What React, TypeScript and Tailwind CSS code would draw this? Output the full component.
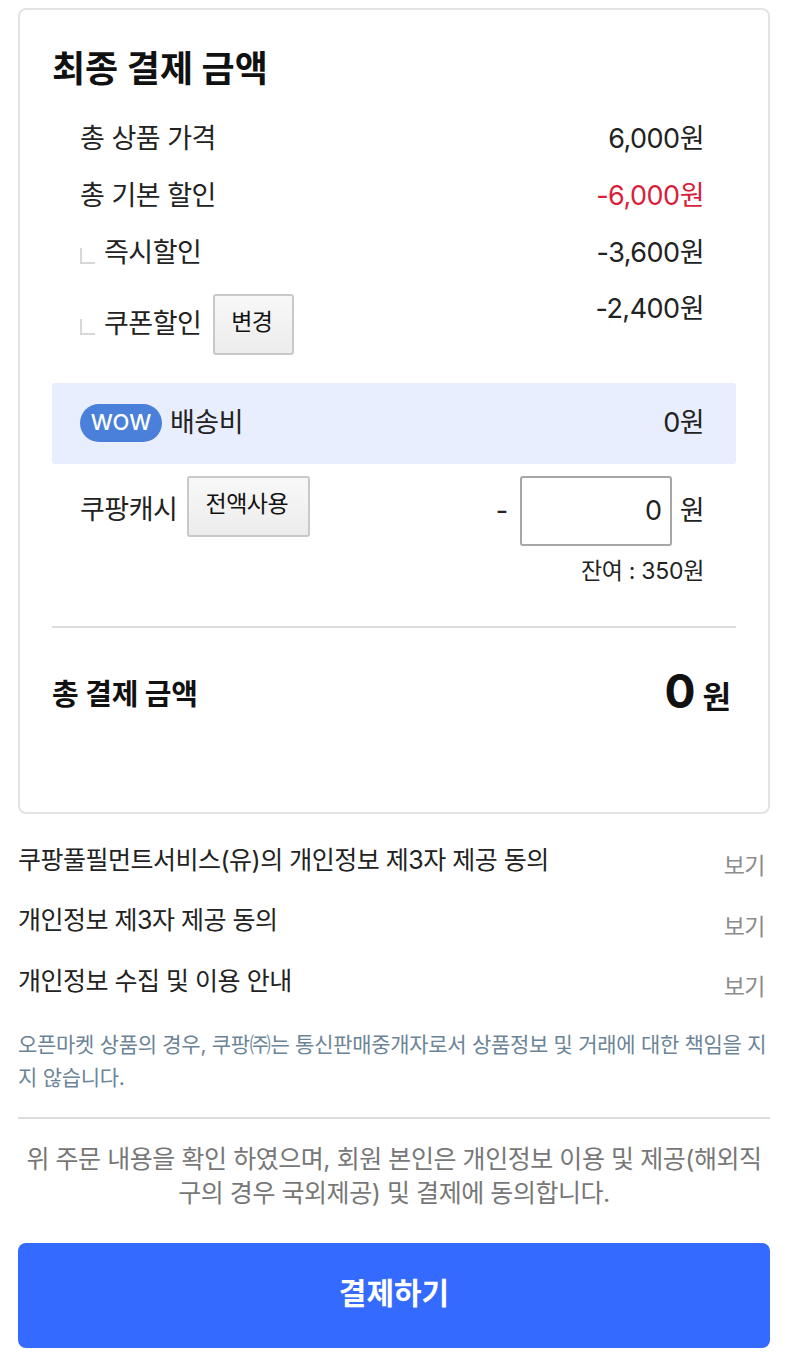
const rowClass = "flex h-[57px] items-center justify-between";

function Elbow() {
  return <span className="mr-[9px] mt-[5px] block h-[16px] w-[15px] border-b-2 border-l-2 border-[#d8d8d8]" />;
}

function GrayButton({ label, className }: { label: string; className: string }) {
  return (
    <button className={`h-[61px] rounded-[3px] border-2 border-[#c9c9c9] bg-gradient-to-b from-[#f8f8f8] to-[#ececec] pb-[5px] pr-[4px] text-[23px] leading-none text-[#111] ${className}`}>
      {label}
    </button>
  );
}

function AgreeRow({ label }: { label: string }) {
  return (
    <div className="flex h-[60.5px] items-center justify-between">
      <span className="text-[25px] tracking-[-0.5px] text-[#222]">{label}</span>
      <span className="mr-[5px] mt-[12px] text-[23px] tracking-[-0.5px] text-[#8c8c8c]">보기</span>
    </div>
  );
}

export default function App() {
  return (
    <div className="h-[1368px] w-[796px] overflow-hidden bg-white pl-[18px] pr-[26px] pt-[8px] font-['Inter','Noto_Sans_CJK_KR',sans-serif]">
      <section className="h-[806px] rounded-[8px] border-2 border-[#e3e3e3] px-[32px] pt-[29px]">
        <h2 className="mb-[12px] text-[36px] font-bold leading-[60px] text-[#111]">최종 결제 금액</h2>

        <div className="pl-[28px] pr-[32px] text-[27px] tracking-[-0.5px] text-[#222]">
          <div className={rowClass}>
            <span>총 상품 가격</span>
            <span>6,000원</span>
          </div>
          <div className={rowClass}>
            <span>총 기본 할인</span>
            <span className="text-[#d81f3d]">-6,000원</span>
          </div>
          <div className={rowClass}>
            <span className="flex items-center"><Elbow />즉시할인</span>
            <span>-3,600원</span>
          </div>
          <div className="flex h-[73px] items-start justify-between">
            <span className="mt-[12px] flex items-center">
              <Elbow />쿠폰할인
              <GrayButton label="변경" className="ml-[12px] w-[81px]" />
            </span>
            <span className="mt-[7px]">-2,400원</span>
          </div>
        </div>

        <div className="mt-[28px] flex h-[81px] items-center justify-between rounded-[3px] bg-[#e8eefd] pl-[28px] pr-[32px] text-[27px] tracking-[-0.5px] text-[#222]">
          <span className="flex items-center">
            <span className="mb-[2px] mr-[8px] flex h-[38px] w-[82px] items-center justify-center rounded-full bg-[#4a80d9] text-[22px] font-medium tracking-normal text-white">WOW</span>
            배송비
          </span>
          <span>0원</span>
        </div>

        <div className="mt-[12px] flex items-start justify-between pl-[28px] pr-[32px] text-[27px] tracking-[-0.5px] text-[#222]">
          <span className="flex items-center">
            <span className="mt-[8px]">쿠팡캐시</span>
            <GrayButton label="전액사용" className="ml-[10px] w-[123px]" />
          </span>
          <span className="flex items-center">
            <span className="mr-[12px]">-</span>
            <span className="flex h-[70px] w-[152px] items-center justify-end rounded-[3px] border-2 border-[#a6a6a6] pr-[8px]">0</span>
            <span className="ml-[8px]">원</span>
          </span>
        </div>
        <p className="mt-[8px] pr-[32px] text-right text-[23px] tracking-[-0.3px] text-[#222]">잔여 : 350원</p>

        <div className="mt-[37px] flex h-[136px] items-center justify-between border-t-2 border-[#dcdcdc]">
          <span className="text-[29px] font-bold tracking-[-0.2px] text-[#111]">총 결제 금액</span>
          <span className="mr-[5px] flex items-baseline font-bold text-[#111]">
            <span className="mr-[7px] text-[46px] leading-none">0</span>
            <span className="text-[31px]">원</span>
          </span>
        </div>
      </section>

      <div className="mt-[16px]">
        <AgreeRow label="쿠팡풀필먼트서비스(유)의 개인정보 제3자 제공 동의" />
        <AgreeRow label="개인정보 제3자 제공 동의" />
        <AgreeRow label="개인정보 수집 및 이용 안내" />
      </div>

      <p className="mt-[16px] border-b-2 border-[#dcdcdc] pb-[23px] text-[21px] leading-[33px] tracking-[-0.3px] text-[#6c8497]">
        오픈마켓 상품의 경우, 쿠팡㈜는 통신판매중개자로서 상품정보 및 거래에 대한 책임을 지지 않습니다.
      </p>

      <p className="mt-[23px] px-[6px] text-center text-[25px] leading-[34px] tracking-[-0.45px] text-[#777]">
        위 주문 내용을 확인 하였으며, 회원 본인은 개인정보 이용 및 제공(해외직구의 경우 국외제공) 및 결제에 동의합니다.
      </p>

      <button className="mt-[33px] h-[105px] w-full rounded-[8px] bg-[#346aff] pb-[4px] text-[30px] font-bold text-white">결제하기</button>
    </div>
  );
}
